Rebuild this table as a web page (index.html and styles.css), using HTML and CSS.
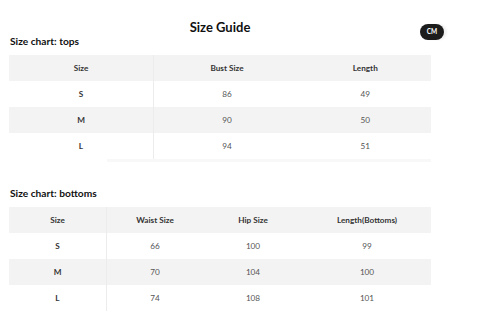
FILE: index.html
```html
<html>

<head>
    <meta charset="utf-8" />
    <link rel="stylesheet" href="styles.css">
</head>

<body>
    <div class="guide">
        <h1>Size Guide</h1>
        <span class="unit">CM</span>

        <!-- Tops -->
        <h2>Size chart: tops</h2>
        <table class="tops">
            <tr>
                <th>Size</th>
                <th>Bust Size</th>
                <th>Length</th>
            </tr>
            <tr>
                <td>S</td>
                <td>86</td>
                <td>49</td>
            </tr>
            <tr>
                <td>M</td>
                <td>90</td>
                <td>50</td>
            </tr>
            <tr>
                <td>L</td>
                <td>94</td>
                <td>51</td>
            </tr>
        </table>
        <div class="scroll-edge"></div>

        <!-- Bottoms -->
        <h2 class="second">Size chart: bottoms</h2>
        <table class="bottoms">
            <tr>
                <th>Size</th>
                <th>Waist Size</th>
                <th>Hip Size</th>
                <th>Length(Bottoms)</th>
            </tr>
            <tr>
                <td>S</td>
                <td>66</td>
                <td>100</td>
                <td>99</td>
            </tr>
            <tr>
                <td>M</td>
                <td>70</td>
                <td>104</td>
                <td>100</td>
            </tr>
            <tr>
                <td>L</td>
                <td>74</td>
                <td>108</td>
                <td>101</td>
            </tr>
        </table>
    </div>
</body>
</html>
```

FILE: styles.css
```css
body {
    margin: 0;
    background: #ffffff;
    font-family: Lato, "Noto Sans", sans-serif;
    color: #222222;
}

.guide {
    position: relative;
    width: 422px;
    margin-left: 9px;
    padding-top: 20px;
}

h1 {
    margin: 0;
    font-size: 13px;
    line-height: 14px;
    text-align: center;
    font-weight: 700;
    color: #111111;
}

.unit {
    position: absolute;
    left: 411px;
    top: 24px;
    width: 24px;
    height: 16px;
    border-radius: 8px;
    background: #1c1c1c;
    color: #ffffff;
    font-size: 6.5px;
    font-weight: 700;
    line-height: 16px;
    text-align: center;
    box-shadow: 3px 0 2px #f2f2f2;
}

h2 {
    margin: 0 0 7px 1px;
    font-size: 10.2px;
    line-height: 14px;
    font-weight: 700;
    color: #111111;
}

h2.second {
    margin-top: 24px;
}

table {
    width: 422px;
    border-collapse: collapse;
    table-layout: fixed;
}

th,
td {
    height: 26px;
    padding: 0;
    font-size: 8.2px;
    text-align: center;
    vertical-align: middle;
}

th {
    font-weight: 700;
    color: #333333;
}

td {
    color: #555555;
}

tr:nth-child(odd) {
    background: #f3f3f3;
}

tr th:first-child,
tr td:first-child {
    border-right: 1px solid #ececec;
    font-weight: 700;
    color: #333333;
}

.tops th:nth-child(1) {
    width: 144px;
}

.tops th:nth-child(2) {
    width: 146px;
}

.bottoms th:nth-child(1) {
    width: 97px;
}

.bottoms th:nth-child(2) {
    width: 96px;
}

.bottoms th:nth-child(3) {
    width: 100px;
}

.scroll-edge {
    height: 3px;
    margin-left: 98px;
    background: #f8f8f8;
}
```
